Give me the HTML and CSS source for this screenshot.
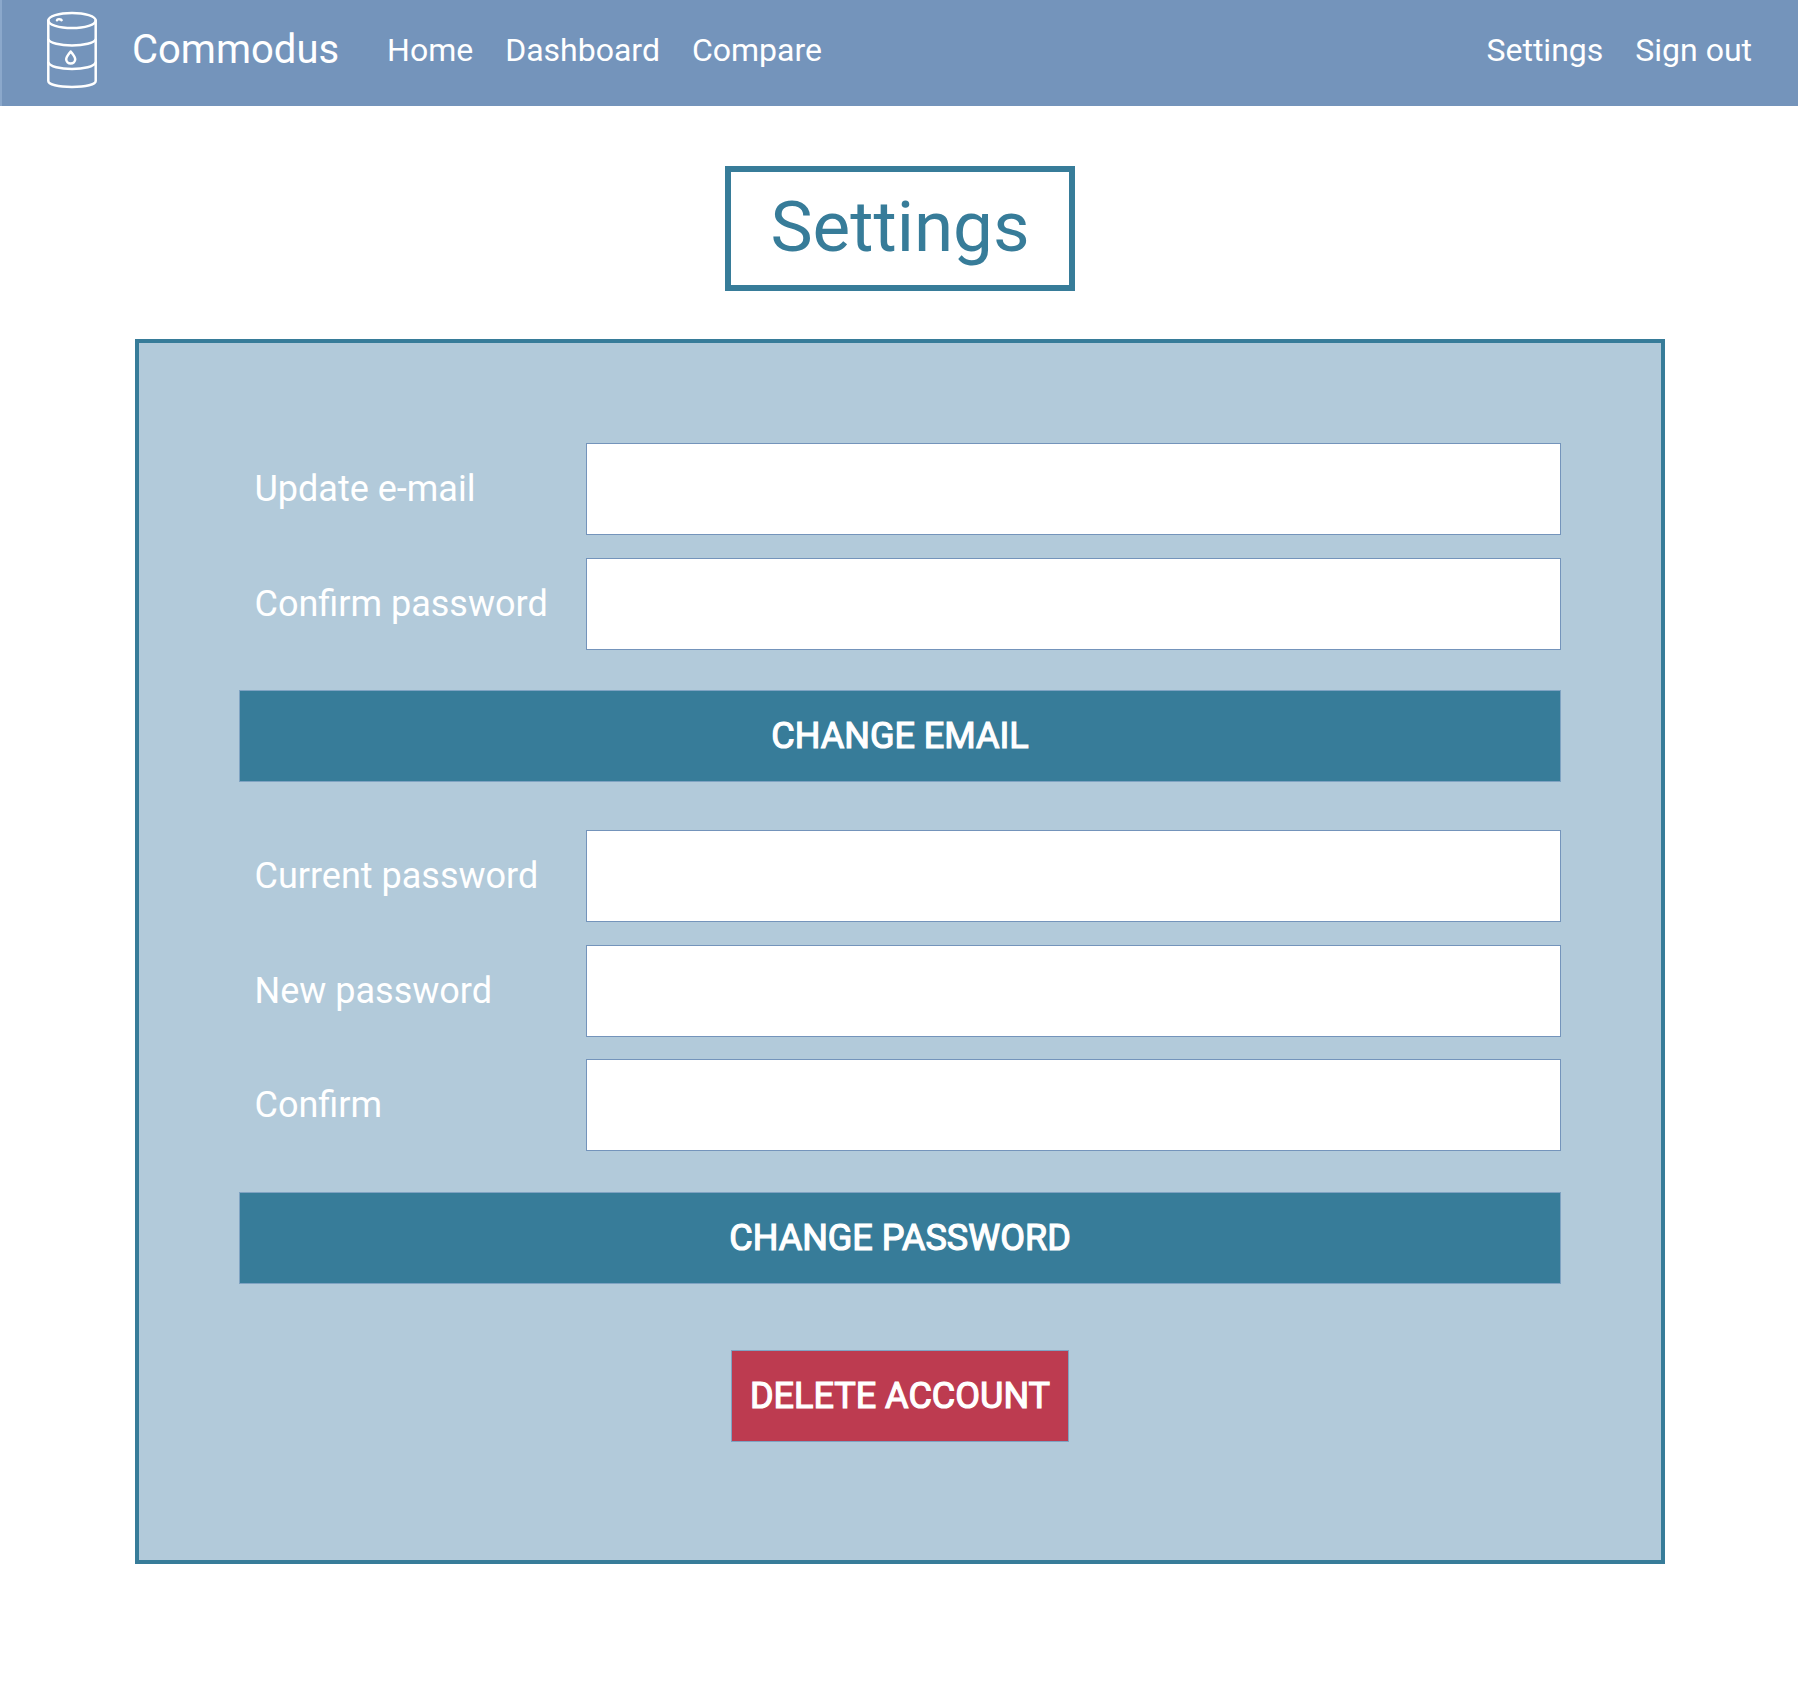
FILE: index.html
```html
<!DOCTYPE html>
<html lang="en">
<head>
<meta charset="utf-8">
<title>Commodus</title>
<link rel="stylesheet" href="styles.css">
</head>
<body>
<nav class="navbar">
  <svg class="logo" width="56" height="84" viewBox="44 8 56 84" aria-hidden="true">
    <ellipse cx="72" cy="20.5" rx="23.7" ry="7.6"/>
    <path d="M48.3 20.5V81C48.3 84.500 58 87 72 87S95.700 84.500 95.700 81V20.500"/>
    <path d="M48.300 39.500C50 43 60 45.500 72 45.500S94 43 95.700 39.500"/>
    <path d="M48.300 62.500C50 66.500 60 69 72 69S94 66.500 95.700 62.500"/>
    <path d="M70.700 51.500C68.500 54.500 66.200 57 66.200 59.300A4.500 4.200 0 0 0 75.200 59.300C75.200 57 72.900 54.500 70.700 51.500Z"/>
    <path d="M57 20.200Q57.300 19 59.300 19.200T61.600 20.200"/>
  </svg>
  <a class="brand">Commodus</a>
  <a class="link">Home</a>
  <a class="link">Dashboard</a>
  <a class="link">Compare</a>
  <div class="account">
    <a class="link">Settings</a>
    <a class="link">Sign out</a>
  </div>
</nav>
<main class="page">
  <h1 class="title">Settings</h1>
  <section class="card">
    <form class="form form-email">
      <div class="row"><label class="label" for="email">Update e-mail</label><input class="input" id="email" type="email"></div>
      <div class="row"><label class="label" for="confirm-email">Confirm password</label><input class="input" id="confirm-email" type="password"></div>
      <button class="button" type="button">CHANGE EMAIL</button>
    </form>
    <form class="form form-password">
      <div class="row"><label class="label" for="current">Current password</label><input class="input" id="current" type="password"></div>
      <div class="row"><label class="label" for="new">New password</label><input class="input" id="new" type="password"></div>
      <div class="row row-last"><label class="label" for="confirm">Confirm</label><input class="input" id="confirm" type="password"></div>
      <button class="button" type="button">CHANGE PASSWORD</button>
    </form>
    <button class="button button-danger" type="button">DELETE ACCOUNT</button>
  </section>
</main>
</body>
</html>
```
FILE: styles.css
```css
* { box-sizing: border-box; }

body {
  margin: 0;
  background: #fff;
  font-family: Roboto, "Liberation Sans", sans-serif;
}

.navbar {
  display: flex;
  align-items: center;
  height: 106px;
  padding: 0 46px 6px 42px;
  border-left: 2px solid #8ba8cb;
  background: #7494bb;
  color: #fff;
}

.logo {
  fill: none;
  stroke: #fff;
  stroke-width: 2.5;
  stroke-linejoin: round;
  stroke-linecap: round;
}

.brand {
  margin: 0 48px 0 32px;
  font-size: 40px;
  line-height: 60px;
}

.link {
  margin-right: 32px;
  font-size: 32px;
  line-height: 48px;
}

.account { display: flex; margin-left: auto; }
.account .link:last-child { margin-right: 0; }

.page {
  display: flex;
  flex-direction: column;
  align-items: center;
  padding: 60px 133px 0 135px;
}

.title {
  display: flex;
  align-items: center;
  justify-content: center;
  width: 350px;
  height: 125px;
  margin: 0 0 48px;
  padding-bottom: 4px;
  border: 6px solid #377c99;
  color: #377c99;
  font-size: 71px;
  font-weight: 400;
}

.card {
  width: 100%;
  height: 1225px;
  padding: 100px;
  border: 4px solid #377c99;
  background: #b2cada;
  text-align: center;
}

.form-email { margin-bottom: 48px; }
.form-password { margin-bottom: 66px; }

.row {
  display: flex;
  align-items: center;
  margin-bottom: 23px;
}

.row:nth-child(2) { margin-bottom: 22px; }
.row-last { margin-bottom: 41px; }
.form-email .row:nth-child(2) { margin-bottom: 40px; }

.label {
  flex: 0 0 347px;
  padding-left: 15.5px;
  color: #fff;
  font-size: 36px;
  line-height: 54px;
  text-align: left;
}

.input {
  flex: 1;
  min-width: 0;
  height: 92px;
  padding: 0 16px;
  border: 1px solid #7494bb;
  border-radius: 0;
  background: #fff;
  font: inherit;
  font-size: 36px;
}

.button {
  display: block;
  width: 100%;
  height: 92px;
  padding: 0;
  border: 1px solid #7fa3c2;
  background: #377c99;
  color: #fff;
  font-family: inherit;
  font-size: 36px;
  font-weight: 400;
  -webkit-text-stroke: 1.2px #fff;
}

.button-danger {
  width: 338px;
  margin: 0 auto;
  background: #bd3b50;
}
```
